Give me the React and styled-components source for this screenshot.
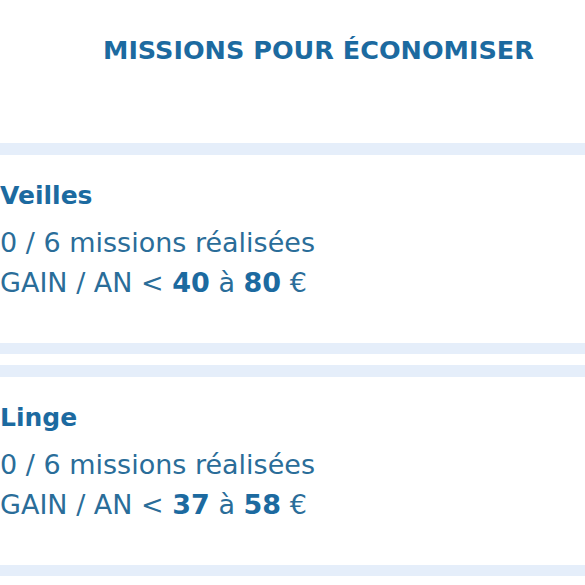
import React from "react";
import styled, { createGlobalStyle } from "styled-components";

const Global = createGlobalStyle`
  html, body { margin: 0; padding: 0; background: #ffffff; }
  body { font-family: "DejaVu Sans", "Open Sans", sans-serif; }
`;

const Page = styled.div`
  width: 585px;
  overflow: hidden;
`;

const Header = styled.header`
  height: 143px;
  box-sizing: border-box;
  padding: 34px 0 0 103px;
`;

const Title = styled.h1`
  margin: 0;
  font-size: 25.5px;
  line-height: 32px;
  font-weight: 700;
  color: #1c6aa0;
  white-space: nowrap;
`;

const List = styled.div`
  display: flex;
  flex-direction: column;
  gap: 11px;
`;

const Card = styled.section`
  border-top: 12px solid #e5eefa;
  border-bottom: 11px solid #e5eefa;
  background: #ffffff;
  height: 188px;
  box-sizing: content-box;
`;

const CardBody = styled.div`
  padding-top: 24px;
  display: flex;
  flex-direction: column;
`;

const CardTitle = styled.h2`
  margin: 0 0 10px;
  font-size: 25px;
  line-height: 34px;
  font-weight: 700;
  color: #1c6aa0;
`;

const Line = styled.p`
  margin: 0;
  font-size: 27px;
  line-height: 40px;
  font-weight: 400;
  color: #2a6d99;
  white-space: nowrap;
`;

const Strong = styled.b`
  font-weight: 700;
  color: #1c6aa0;
`;

const missions = [
  { name: "Veilles", done: 0, total: 6, min: 40, max: 80 },
  { name: "Linge", done: 0, total: 6, min: 37, max: 58 },
];

export default function App() {
  return (
    <Page>
      <Global />
      <Header>
        <Title>MISSIONS POUR ÉCONOMISER</Title>
      </Header>
      <List>
        {missions.map((m) => (
          <Card key={m.name}>
            <CardBody>
              <CardTitle>{m.name}</CardTitle>
              <Line>
                {m.done} / {m.total} missions réalisées
              </Line>
              <Line>
                GAIN / AN &lt; <Strong>{m.min}</Strong> à <Strong>{m.max}</Strong> €
              </Line>
            </CardBody>
          </Card>
        ))}
      </List>
    </Page>
  );
}
